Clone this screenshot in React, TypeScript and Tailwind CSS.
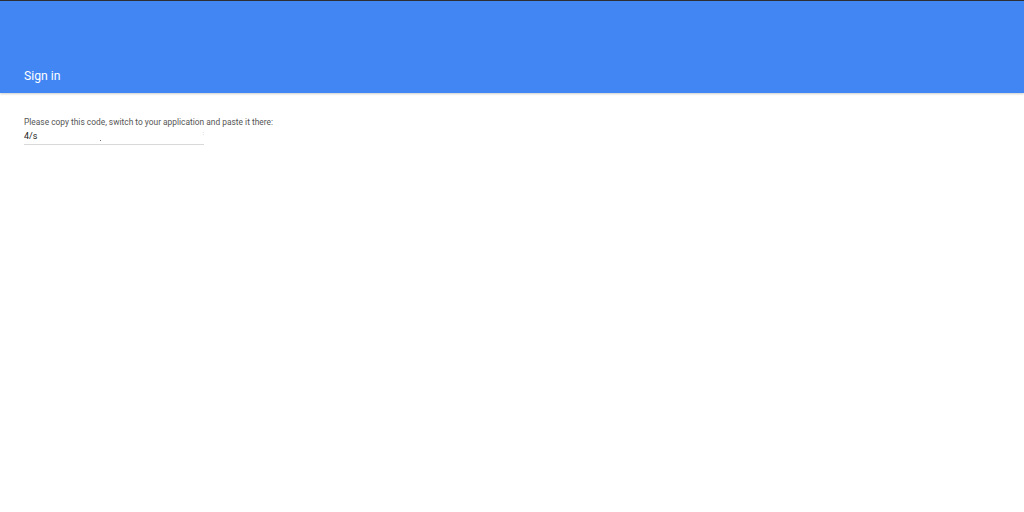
export default function App() {
  return (
    <div className="w-[1024px] h-[512px] bg-white" style={{ fontFamily: "Roboto, 'Liberation Sans', sans-serif" }}>
      <div className="h-px bg-[#2f3033]" />
      <div className="h-[92px] bg-[#4286f4] shadow-[0_1px_2px_rgba(0,0,0,0.2)] flex items-end px-6 pb-[11px]">
        <span className="text-white text-[12.2px] leading-none">Sign in</span>
      </div>
      <div className="pl-6 pt-[24px] text-[8px] leading-[10px]">
        <div className="text-[8.4px] leading-[10px] text-[#555]">Please copy this code, switch to your application and paste it there:</div>
        <div className="relative w-[180px] h-[16px] border-b border-[#d9d9d9] mt-[2px]">
          <div className="text-[9px] leading-[12px] text-[#222] pt-px">4/s</div>
          <span className="absolute left-[76px] top-[11px] w-px h-px bg-[#777]" />
          <span className="absolute right-0 top-[1px] text-[6px] leading-none text-[#999]">:</span>
        </div>
      </div>
    </div>
  );
}
